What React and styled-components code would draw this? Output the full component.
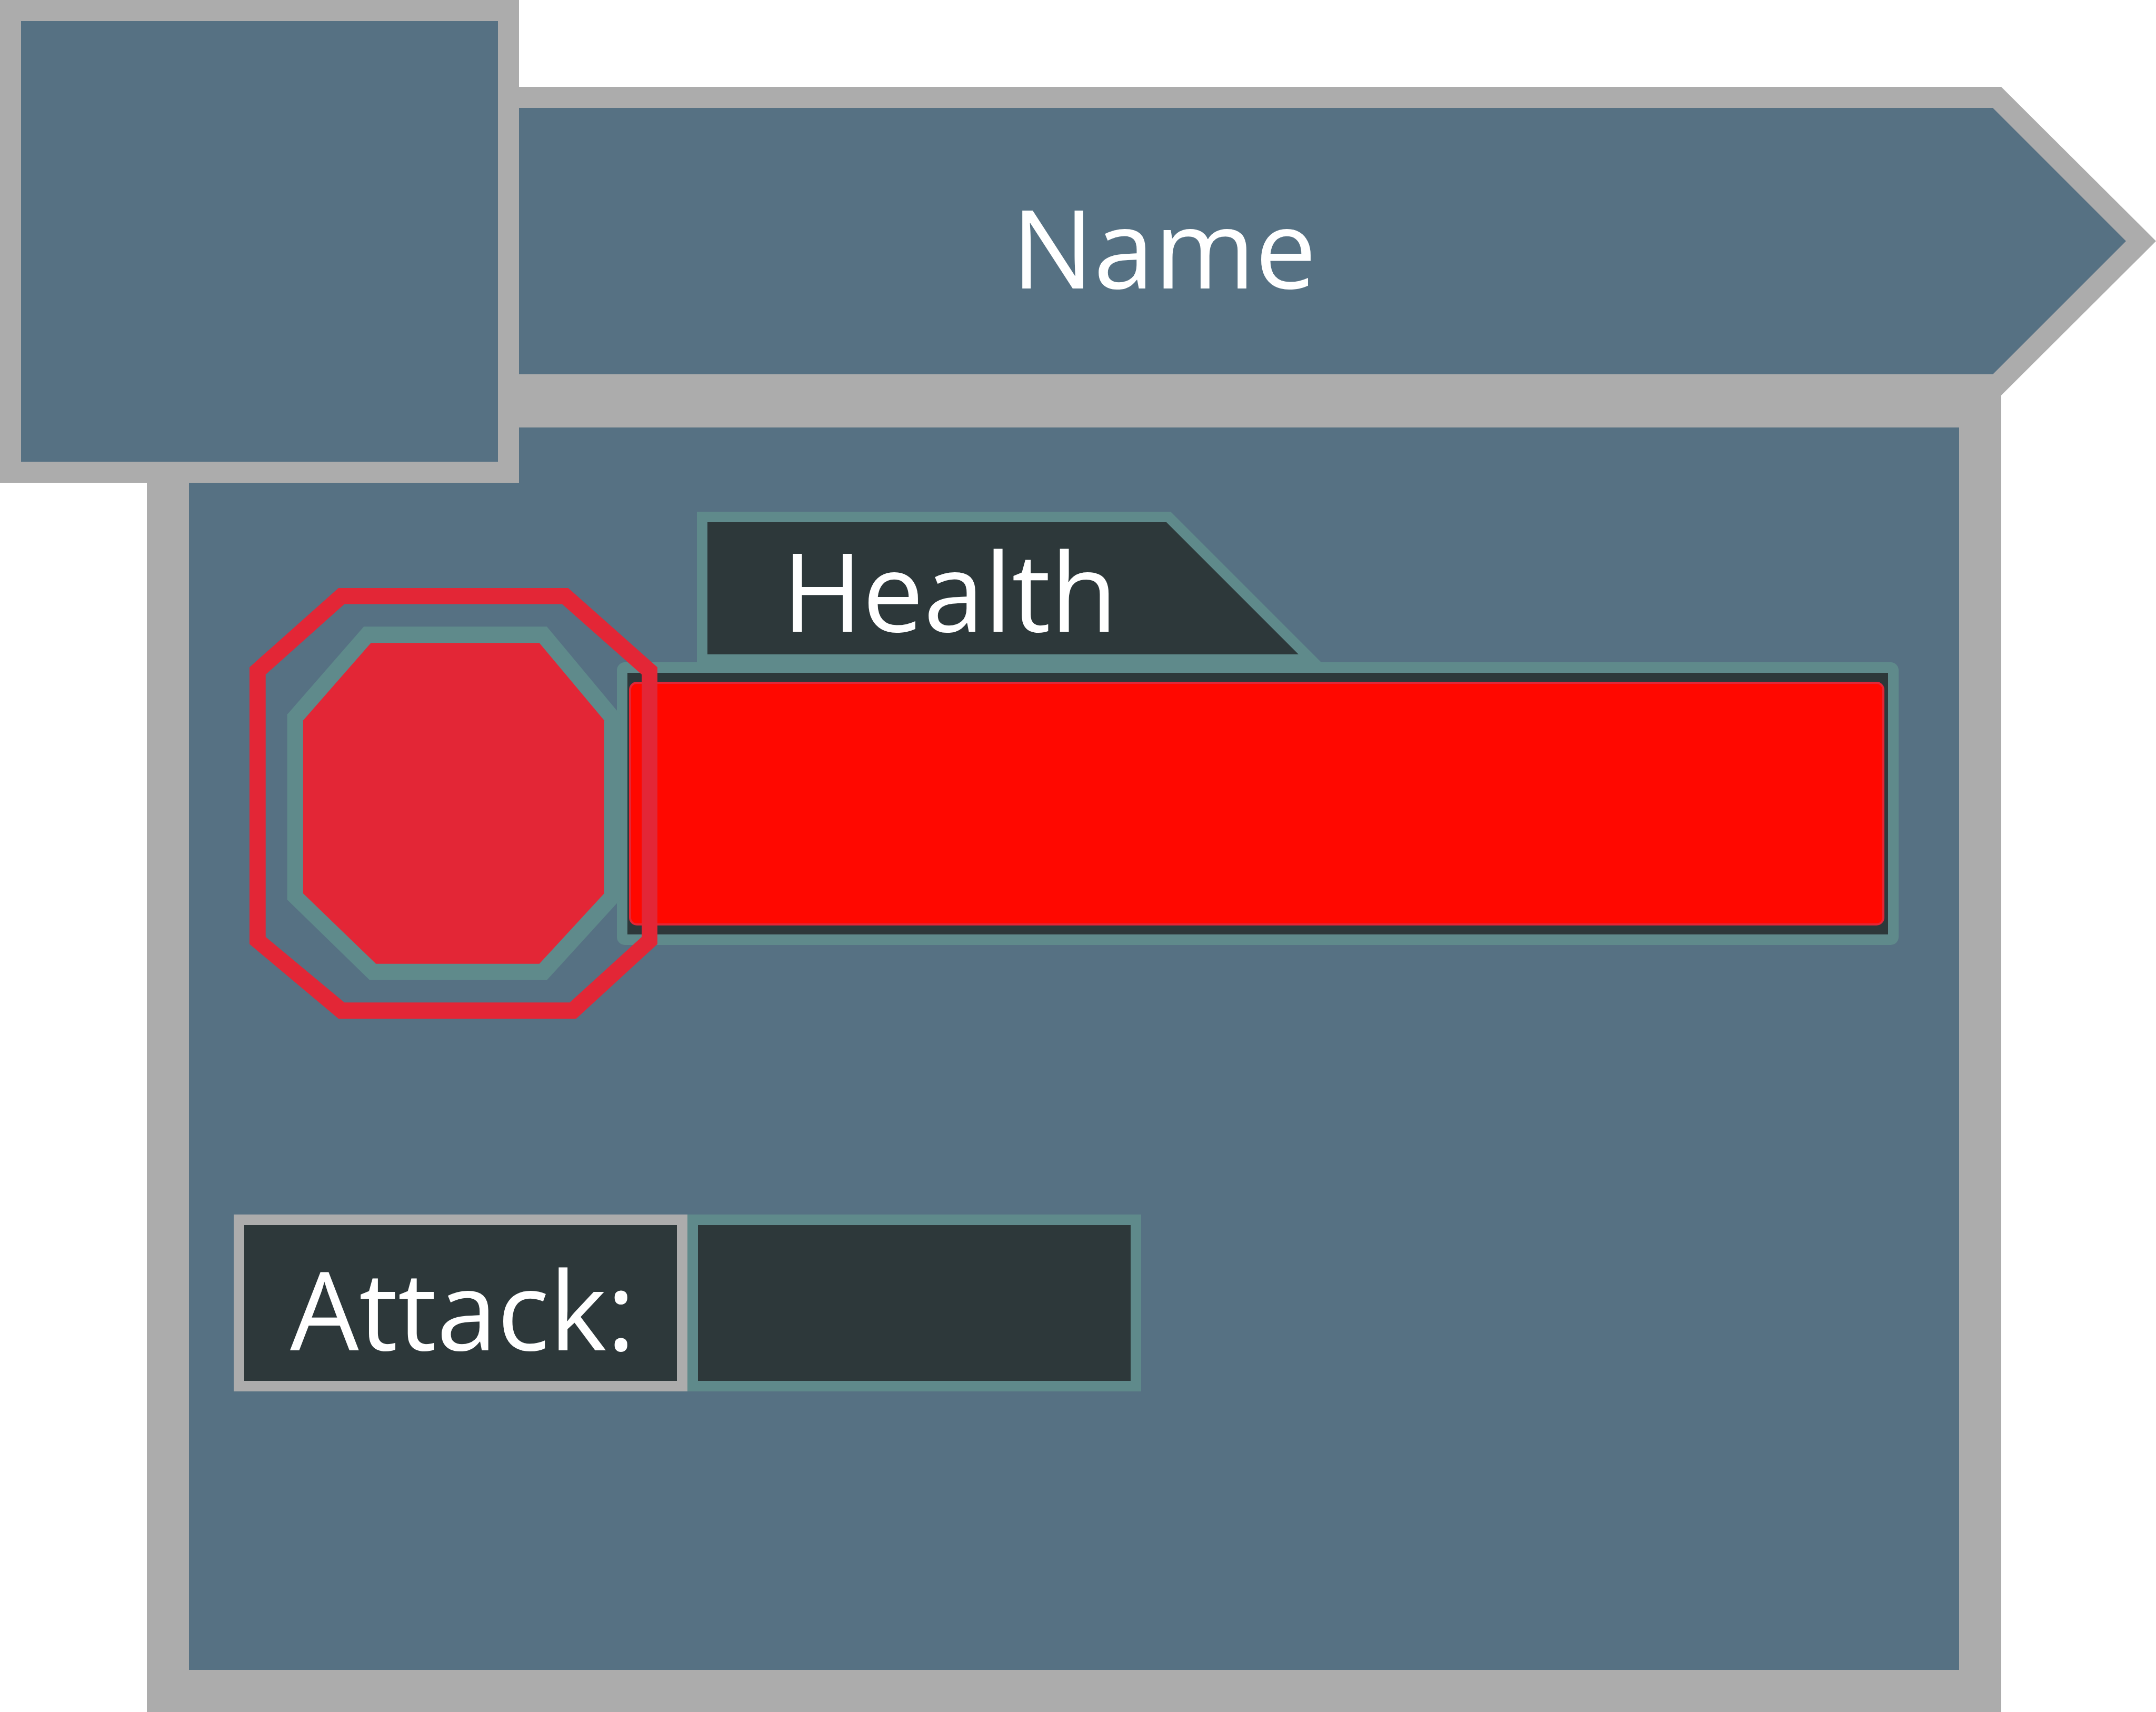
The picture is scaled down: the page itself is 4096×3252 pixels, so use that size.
import React from "react";
import styled, { createGlobalStyle } from "styled-components";

const color = {
  panel: "#567183",
  frame: "#acacac",
  teal: "#5f8a8b",
  dark: "#2d383a",
  crimson: "#e32636",
  health: "#ff0800",
  text: "#ffffff",
};

const GlobalStyle = createGlobalStyle`
  *, *::before, *::after { box-sizing: border-box; }
  body {
    margin: 0;
    background: #ffffff;
    color: ${color.text};
    font-family: "Open Sans", "Noto Sans", sans-serif;
    font-size: 207px;
    line-height: 240px;
  }
`;

/* The portrait and the banner both lap over the edge of the body panel. */
const Card = styled.main`
  display: grid;
  grid-template-columns: 279px 707px 1fr 294px;
  grid-template-rows: 165px 567px 19px 166px 1fr;
  min-height: 100vh;
`;

const Portrait = styled.div`
  grid-area: 1 / 1 / 5 / 3;
  z-index: 2;
  border: 40px solid ${color.frame};
  background: ${color.panel};
`;

const Banner = styled.header`
  grid-area: 2 / 3 / 4 / 5;
  z-index: 1;
  display: flex;
  padding: 40px 57px 40px 0;
  background: ${color.frame};
  clip-path: polygon(
    0 0,
    calc(100% - 294px) 0,
    100% 50%,
    calc(100% - 294px) 100%,
    0 100%
  );
`;

const BannerFace = styled.div`
  flex: 1;
  display: flex;
  align-items: center;
  padding: 20px 0 0 936px;
  background: ${color.panel};
  clip-path: polygon(
    0 0,
    calc(100% - 253px) 0,
    100% 50%,
    calc(100% - 253px) 100%,
    0 100%
  );
`;

const Name = styled.h1`
  margin: 0;
  font: inherit;
`;

const Body = styled.section`
  grid-area: 3 / 2 / 6 / 4;
  display: flex;
  flex-direction: column;
  gap: 372px;
  padding: 160px 115px 160px 85px;
  border: 80px solid ${color.frame};
  background: ${color.panel};
`;

const Health = styled.div`
  display: grid;
  grid-template-columns: 698px 77px 1fr;
  grid-template-rows: 145px 141px 537px 140px;
  margin-left: 30px;
`;

const Tab = styled.div`
  grid-area: 1 / 2 / 3 / 4;
  width: 1191px;
  height: 291px;
  margin-left: 152px;
  padding: 20px 48px 20px 20px;
  display: flex;
  background: ${color.teal};
  clip-path: polygon(0 0, calc(100% - 291px) 0, 100% 100%, 0 100%);
`;

const TabFace = styled.h2`
  flex: 1;
  display: flex;
  align-items: center;
  margin: 0;
  padding: 4px 0 0 142px;
  font: inherit;
  background: ${color.dark};
  clip-path: polygon(0 0, calc(100% - 251px) 0, 100% 100%, 0 100%);
`;

const Bar = styled.div`
  grid-area: 3 / 2 / 4 / 4;
  display: flex;
  padding: 17px 7px 17px 3px;
  border: 20px solid ${color.teal};
  border-radius: 15px;
  background: ${color.dark};
`;

const BarFill = styled.div`
  border: 4px solid ${color.crimson};
  border-radius: 15px;
  background: ${color.health};
`;

const Emblem = styled.svg`
  grid-area: 2 / 1 / 5 / 3;
  width: 100%;
  height: 100%;
`;

const Stat = styled.div`
  display: flex;
`;

const StatLabel = styled.label`
  display: flex;
  align-items: center;
  width: 862px;
  height: 336px;
  padding: 20px 0 0 87px;
  border: 20px solid ${color.frame};
  background: ${color.dark};
`;

const StatValue = styled.input`
  width: 862px;
  height: 336px;
  padding: 20px 60px 0;
  border: 20px solid ${color.teal};
  border-radius: 0;
  outline: none;
  background: ${color.dark};
  color: inherit;
  font: inherit;
`;

function HealthEmblem() {
  return (
    <Emblem viewBox="0 0 974 1028" preserveAspectRatio="none" aria-hidden="true">
      <polygon
        fill={color.teal}
        points="273,92 710,92 885,302 885,744 710,936 287,936 90,744 90,302"
      />
      <polygon
        fill={color.crimson}
        points="290,131 692,131 847,316 847,729 692,897 302,897 128,729 128,316"
      />
      <path
        fill={color.crimson}
        fillRule="evenodd"
        d="M212.5 0H761L974 189V850L780 1028H212.5L0 850V189Z
           M226.6 38.4L38.6 206.4V832.8L226.6 989.3H764.6L936.5 832.8V206.4L746.4 38.4Z"
      />
    </Emblem>
  );
}

export default function App() {
  const health = 100;
  return (
    <>
      <GlobalStyle />
      <Card>
        <Portrait />
        <Banner>
          <BannerFace>
            <Name>Name</Name>
          </BannerFace>
        </Banner>
        <Body>
          <Health>
            <Tab>
              <TabFace id="health-title">Health</TabFace>
            </Tab>
            <Bar
              role="meter"
              aria-labelledby="health-title"
              aria-valuemin={0}
              aria-valuemax={100}
              aria-valuenow={health}
            >
              <BarFill style={{ width: `${health}%` }} />
            </Bar>
            <HealthEmblem />
          </Health>
          <Stat>
            <StatLabel htmlFor="attack">Attack:</StatLabel>
            <StatValue id="attack" type="text" />
          </Stat>
        </Body>
      </Card>
    </>
  );
}
